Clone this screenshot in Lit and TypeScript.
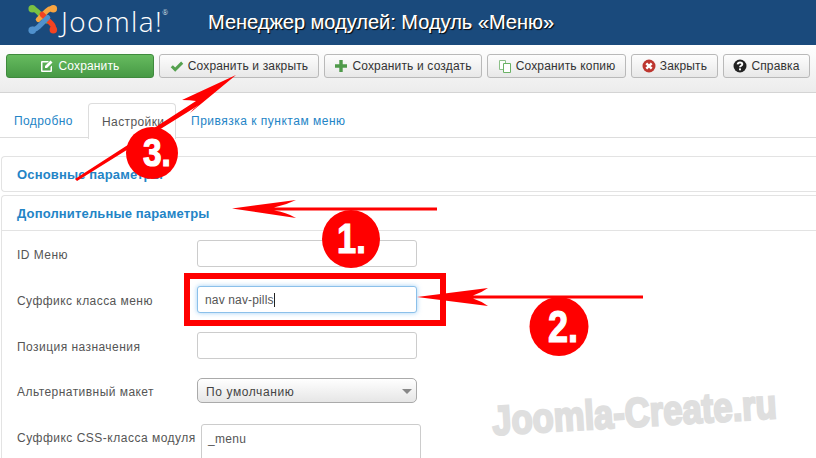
import { LitElement, html, css, svg } from "lit";
import { customElement } from "lit/decorators.js";

const icons = {
  edit: svg`<svg class="ic" width="14" height="14" viewBox="0 0 14 14"><path fill="#fff" d="M1 2h8L7.500 3.500H2.500v8h8V8L12 6.500V12a1 1 0 0 1-1 1H2a1 1 0 0 1-1-1V3a1 1 0 0 1 1-1z"/><path fill="#fff" d="M5 7l5.500-5.500 2 2L7 9H5z"/></svg>`,
  check: svg`<svg class="ic" width="14" height="14" viewBox="0 0 14 14"><path fill="none" stroke="#55a14f" stroke-width="3" d="M1.800 7.200l3.400 3.400 7-7"/></svg>`,
  plus: svg`<svg class="ic" width="14" height="14" viewBox="0 0 14 14"><path fill="#4f9a4a" d="M5.300 1h3.400v4.300H13v3.400H8.700V13H5.300V8.700H1V5.300h4.300z"/></svg>`,
  copy: svg`<svg class="ic" width="14" height="14" viewBox="0 0 14 14"><path fill="#fff" stroke="#8cc088" d="M1.500 1.500h6v9h-6z"/><path fill="#fff" stroke="#6ab265" d="M5.500 4.500h7v9h-7z"/></svg>`,
  times: svg`<svg class="ic" width="14" height="14" viewBox="0 0 14 14"><circle cx="7" cy="7" r="6.500" fill="#bd362f"/><path stroke="#fff" stroke-width="2.400" d="M4.300 4.300l5.400 5.400M9.700 4.300l-5.400 5.400"/></svg>`,
  help: svg`<svg class="ic" width="14" height="14" viewBox="0 0 14 14"><circle cx="7" cy="7" r="6.500" fill="#222"/><path fill="none" stroke="#fff" stroke-width="1.900" d="M4.600 5.400c.2-1.300 1.200-1.900 2.400-1.900 1.300 0 2.300.7 2.300 1.800 0 1.500-2.300 1.500-2.300 3"/><rect x="6" y="9.400" width="2" height="1.900" fill="#fff"/></svg>`,
};

const logo = svg`<svg class="logo" width="30" height="30" viewBox="0 0 32 32">
  <g fill="none" stroke-width="5.500" stroke-linecap="round">
    <path stroke="#7ac143" d="M5 5.500c2-.5 3 .5 5 2.500l10 10"/>
    <path stroke="#f9a541" d="M26 5c-2-.5-4 .5-6 2.500L11 16.500"/>
    <path stroke="#f44321" d="M27 26c.5-2-.5-3.500-2-5L15 11"/>
    <path stroke="#5091cd" d="M5 27c2 .5 4-.5 6-2.500L21 14.500"/>
  </g>
  <circle cx="4.500" cy="5" r="4" fill="#7ac143"/>
  <circle cx="27" cy="5" r="4" fill="#f9a541"/>
  <circle cx="27" cy="27.500" r="4" fill="#f44321"/>
  <circle cx="4.500" cy="28" r="4" fill="#5091cd"/>
</svg>`;

const buttons = [
  { icon: icons.check, label: "Сохранить и закрыть", w: 160 },
  { icon: icons.plus, label: "Сохранить и создать", w: 158 },
  { icon: icons.copy, label: "Сохранить копию", w: 139 },
  { icon: icons.times, label: "Закрыть", w: 87 },
  { icon: icons.help, label: "Справка", w: 87 },
];

@customElement("app-root")
export class AppRoot extends LitElement {
  static styles = css`
    :host { display: block; width: 816px; height: 458px; overflow: hidden; position: relative; background: #fff; font-family: "Liberation Sans", Arial, sans-serif; font-size: 12px; color: #555; }
    .head { height: 45px; background: #1a4a7c; display: flex; align-items: center; box-sizing: border-box; padding-left: 28px; }
    .logo { flex: none; margin-top: -7px; }
    .brand { width: 147px; flex: none; margin-left: 3px; margin-top: -4px; font-family: "Open Sans", sans-serif; font-weight: 300; font-size: 28px; letter-spacing: 1.4px; color: #fff; line-height: 32px; white-space: nowrap; }
    .brand sup { font-size: 7px; vertical-align: top; margin-left: -1px; line-height: 16px; }
    h1 { margin: -1px 0 0 0; font-size: 20px; font-weight: 400; color: #fff; text-shadow: 1px 1px 1px #000, .4px 0 0 #fff; white-space: nowrap; }
    .bar { height: 48px; box-sizing: border-box; background: linear-gradient(#fff, #ececec); border-bottom: 1px solid #d4d4d4; display: flex; gap: 5px; padding: 9px 0 0 6px; letter-spacing: .16px; }
    .btn { height: 24px; box-sizing: border-box; display: flex; align-items: center; justify-content: center; gap: 4px; border: 1px solid #b9b9b9; border-radius: 3px; background: linear-gradient(#fdfdfd, #e8e8e8); color: #333; white-space: nowrap; }
    .btn.save { width: 148px; background: linear-gradient(#66bb5f, #479a45); border-color: #3f8a3d; color: #fff; }
    .ic { flex: none; }
    .tabs { display: flex; height: 45px; box-sizing: border-box; padding-top: 10px; border-bottom: 1px solid #ddd; letter-spacing: .4px; }
    .tab { height: 35px; display: flex; align-items: center; box-sizing: border-box; padding: 1px 0 0 14px; width: 88px; color: #2384c6; }
    .tab.on { height: 36px; width: 88px; padding: 1px 0 0 13px; border: 1px solid #ddd; border-bottom: 0; border-radius: 4px 4px 0 0; background: #fff; color: #555; }
    .tab.next { margin-left: 1px; width: auto; letter-spacing: .5px; }
    .acc { margin: 18px 0 0 1px; }
    .sec { border: 1px solid #e3e3e3; border-right: 0; border-radius: 4px 0 0 4px; margin-bottom: 3px; }
    .sec-h { height: 34px; box-sizing: border-box; display: flex; align-items: center; padding: 1px 0 0 15px; font-weight: 700; font-size: 13px; letter-spacing: .15px; color: #2384c6; }
    .sec-h.line { height: 35px; border-bottom: 1px solid #e3e3e3; }
    .sec.open { border-bottom: 0; height: 300px; }
    .form { display: grid; grid-template-columns: 180px 220px; row-gap: 19px; padding: 9px 0 0 15px; align-items: center; letter-spacing: .45px; }
    .lab { white-space: nowrap; padding-top: 3px; }
    .inp { height: 27px; box-sizing: border-box; border: 1px solid #ccc; border-radius: 3px; background: #fff; display: flex; align-items: center; padding-left: 7px; color: #555; letter-spacing: .15px; }
    .inp.focus { border-color: #8bc0ea; box-shadow: 0 0 5px rgba(82,168,236,.55); }
    .caret { display: inline-block; width: 1px; height: 14px; background: #222; }
    .sel { height: 25px; box-sizing: border-box; border: 1px solid #aaa; border-radius: 5px; background: linear-gradient(#fff, #e6e6e6); display: flex; align-items: center; justify-content: space-between; padding: 2px 4px 0 8px; color: #444; letter-spacing: .6px; }
    .arrow { width: 0; height: 0; border: 5px solid transparent; border-top: 5px solid #888; border-bottom: 0; }
    .ta { height: 60px; box-sizing: border-box; width: 220px; margin: 2px 0 0 4px; border: 1px solid #ccc; border-radius: 3px; padding: 7px 0 0 6px; align-self: start; color: #555; letter-spacing: .3px; }
    .lab.top { align-self: start; padding-top: 9px; letter-spacing: .5px; }
    .marks { position: absolute; left: 0; top: 0; pointer-events: none; }
    .num { font-family: "Liberation Sans", sans-serif; font-weight: 700; fill: #fff; stroke: #fff; stroke-width: 1.200px; }
    .wm { font-family: "Liberation Sans", sans-serif; font-weight: 700; fill: #dfdfdf; stroke: #dfdfdf; stroke-width: 2.400px; }
  `;

  render() {
    return html`
      <div class="head">
        ${logo}
        <div class="brand">Joomla!<sup>®</sup></div>
        <h1>Менеджер модулей: Модуль «Меню»</h1>
      </div>
      <div class="bar">
        <div class="btn save">${icons.edit}<span>Сохранить</span></div>
        ${buttons.map((b) => html`<div class="btn" style="width:${b.w}px">${b.icon}<span>${b.label}</span></div>`)}
      </div>
      <div class="tabs">
        <div class="tab">Подробно</div>
        <div class="tab on">Настройки</div>
        <div class="tab next">Привязка к пунктам меню</div>
      </div>
      <div class="acc">
        <div class="sec"><div class="sec-h">Основные параметры</div></div>
        <div class="sec open">
          <div class="sec-h line">Дополнительные параметры</div>
          <div class="form">
            <div class="lab">ID Меню</div><div class="inp"></div>
            <div class="lab">Суффикс класса меню</div><div class="inp focus">nav nav-pills<span class="caret"></span></div>
            <div class="lab">Позиция назначения</div><div class="inp"></div>
            <div class="lab">Альтернативный макет</div><div class="sel"><span>По умолчанию</span><span class="arrow"></span></div>
            <div class="lab top">Суффикс CSS-класса модуля</div><div class="ta">_menu</div>
          </div>
        </div>
      </div>
      <svg class="marks" width="816" height="458" viewBox="0 0 816 458">
        <path fill="none" stroke="#f00" stroke-width="6" d="M187 276h256v47H187z"/>
        <g fill="#f00">
          <path d="M437 207.500H274Q286 205 296 200L232 208.500L296 218Q286 212 274 210.500H437Z"/>
          <path d="M643 295.500H473Q481 293 488 288L417 297L488 306Q481 301 473 298.500H643Z"/>
          <path d="M236 75L182 100Q190 100 196 101L75 179L77 181L199 105Q194 108 190 113Z"/>
          <circle cx="152" cy="153" r="26"/>
          <circle cx="351" cy="239" r="29"/>
          <circle cx="559" cy="326.500" r="29.500"/>
        </g>
        <text class="num" transform="translate(143 166) scale(.88 1)" font-size="38">3.</text>
        <text class="num" transform="translate(337 253) scale(.82 1)" font-size="42">1.</text>
        <text class="num" transform="translate(548 342) scale(.82 1)" font-size="44">2.</text>
        <text class="wm" transform="translate(493 435) rotate(-3.400) scale(.845 1)" font-size="41">Joomla-Create.ru</text>
      </svg>
    `;
  }
}
